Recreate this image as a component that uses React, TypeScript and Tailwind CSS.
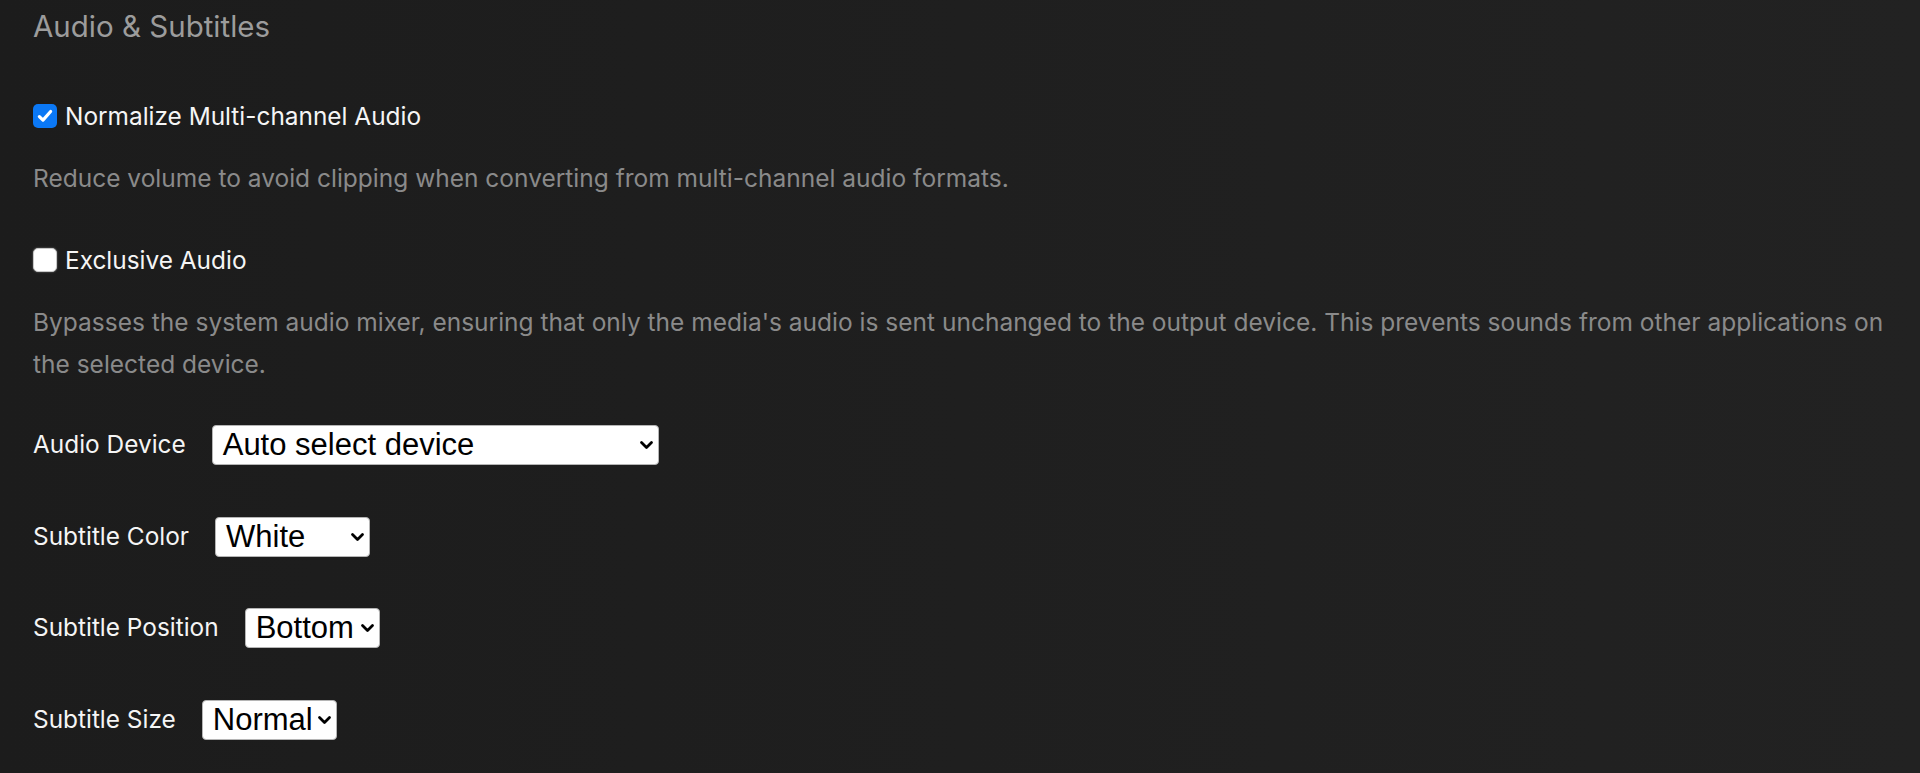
function Checkbox({ checked }: { checked: boolean }) {
  if (checked) {
    return (
      <span className="flex h-[24px] w-[24px] shrink-0 items-center justify-center rounded-[5px] bg-[#0b78f5]">
        <svg width="18" height="18" viewBox="0 0 16 16" fill="none">
          <path d="M3 8.5l3.2 3.2L13 4" stroke="white" strokeWidth="2.8" strokeLinecap="round" strokeLinejoin="round" />
        </svg>
      </span>
    );
  }
  return <span className="h-[24px] w-[24px] shrink-0 rounded-[5px] border border-[#c8c8c8] bg-white shadow-[0_0_2px_rgba(255,255,255,0.4)]" />;
}

function Select({ value, width }: { value: string; width: string }) {
  return (
    <div className={`relative flex h-[40px] items-center rounded-[4px] border border-[#b5b5b5] bg-white pl-[10px] text-black ${width}`}>
      <span className="font-['Liberation_Sans',sans-serif] text-[31px] leading-none">{value}</span>
      <svg className="absolute right-[4px] top-1/2 -translate-y-1/2" width="15" height="10" viewBox="0 0 15 10" fill="none">
        <path d="M2.5 2.5l5 5 5-5" stroke="black" strokeWidth="2.8" strokeLinecap="round" strokeLinejoin="round" />
      </svg>
    </div>
  );
}

function SelectRow({ label, value, width, mt }: { label: string; value: string; width: string; mt: string }) {
  return (
    <div className={`flex h-[41px] items-center ${mt}`}>
      <span className="mr-[26px] text-[24.4px] text-[#f5f5f5]">{label}</span>
      <Select value={value} width={width} />
    </div>
  );
}

export default function App() {
  return (
    <div className="min-h-screen bg-[#1e1e1e] bg-gradient-to-r from-[#1c1c1c] to-[#222222] pl-[33px] pr-[30px] font-['Inter',sans-serif]">
      <h2 className="flex h-[53px] items-center text-[29.5px] font-normal text-[#9c9c9c]">Audio &amp; Subtitles</h2>

      <label className="mt-[43px] flex h-[40px] items-center gap-[8px] text-[24.4px] text-[#f5f5f5]">
        <Checkbox checked />
        <span>Normalize Multi-channel Audio</span>
      </label>
      <p className="mt-[22px] flex h-[40px] items-center text-[24.5px] text-[#8a8a8a]">
        Reduce volume to avoid clipping when converting from multi-channel audio formats.
      </p>

      <label className="mt-[42px] flex h-[40px] items-center gap-[8px] text-[24.4px] text-[#f5f5f5]">
        <Checkbox checked={false} />
        <span>Exclusive Audio</span>
      </label>
      <p className="mt-[21px] text-[24.5px] leading-[42px] text-[#8a8a8a]">
        Bypasses the system audio mixer, ensuring that only the media's audio is sent unchanged to the output device. This prevents sounds from other applications on the selected device.
      </p>

      <SelectRow label="Audio Device" value="Auto select device" width="w-[447px]" mt="mt-[39px]" />
      <SelectRow label="Subtitle Color" value="White" width="w-[155px]" mt="mt-[51px]" />
      <SelectRow label="Subtitle Position" value="Bottom" width="w-[135px]" mt="mt-[50px]" />
      <SelectRow label="Subtitle Size" value="Normal" width="w-[135px]" mt="mt-[51px]" />
    </div>
  );
}
